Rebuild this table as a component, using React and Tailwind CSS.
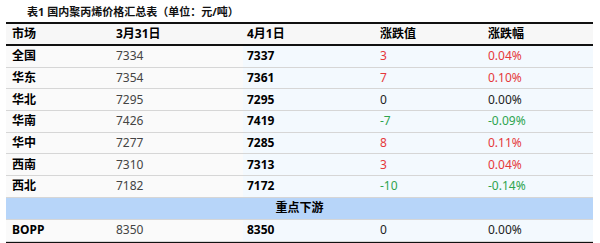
const rows = [
  { m: "全国", a: "7334", b: "7337", d: "3", p: "0.04%", t: "up" },
  { m: "华东", a: "7354", b: "7361", d: "7", p: "0.10%", t: "up" },
  { m: "华北", a: "7295", b: "7295", d: "0", p: "0.00%", t: "flat" },
  { m: "华南", a: "7426", b: "7419", d: "-7", p: "-0.09%", t: "down" },
  { m: "华中", a: "7277", b: "7285", d: "8", p: "0.11%", t: "up" },
  { m: "西南", a: "7310", b: "7313", d: "3", p: "0.04%", t: "up" },
  { m: "西北", a: "7182", b: "7172", d: "-10", p: "-0.14%", t: "down" },
];

const tone = {
  up: "text-[#e5383b]",
  down: "text-[#2ea44f]",
  flat: "text-[#222]",
};

const font = { fontFamily: '"Noto Sans", "Noto Sans CJK SC", sans-serif' };

function Row({ r }) {
  return (
    <div className="grid h-[21.7px] grid-cols-[105px_132px_132px_108px_110px] border-b border-[#d6d6d6] text-[12px] leading-none">
      <div className="flex items-center bg-[#fafafa] pl-[6px] font-bold text-black">{r.m}</div>
      <div className="flex items-center bg-[#fafafa] pl-[5px] text-[#444]">{r.a}</div>
      <div className="flex items-center bg-[#f3f9fe] pl-[4px] font-bold text-black">{r.b}</div>
      <div className={`flex items-center bg-[#f3f9fe] pl-[5px] ${tone[r.t]}`}>{r.d}</div>
      <div className={`flex items-center bg-[#f3f9fe] pl-[5px] ${tone[r.t]}`}>{r.p}</div>
    </div>
  );
}

export default function App() {
  return (
    <div className="h-[243px] w-[600px] bg-white" style={font}>
      <div className="flex h-[22px] items-center pt-[3px]">
        <span className="ml-[27px] text-[11px] font-bold text-[#111]">
          表1 国内聚丙烯价格汇总表（单位：元/吨）
        </span>
      </div>
      <div className="ml-[6px] w-[587px] border-t-2 border-b-2 border-[#111]">
        <div className="grid h-[22px] grid-cols-[105px_132px_132px_108px_110px] border-b-2 border-[#111] bg-[#f7f7f7] text-[12px] font-bold leading-none text-black">
          <div className="flex items-center pl-[6px]">市场</div>
          <div className="flex items-center pl-[5px]">3月31日</div>
          <div className="flex items-center pl-[4px]">4月1日</div>
          <div className="flex items-center pl-[5px]">涨跌值</div>
          <div className="flex items-center pl-[5px]">涨跌幅</div>
        </div>
        {rows.map((r) => (
          <Row key={r.m} r={r} />
        ))}
        <div className="flex h-[22px] items-center justify-center border-b border-[#d6d6d6] bg-[#b7d5f9] text-[12px] font-bold text-black">
          重点下游
        </div>
        <Row r={{ m: "BOPP", a: "8350", b: "8350", d: "0", p: "0.00%", t: "flat" }} />
      </div>
    </div>
  );
}
